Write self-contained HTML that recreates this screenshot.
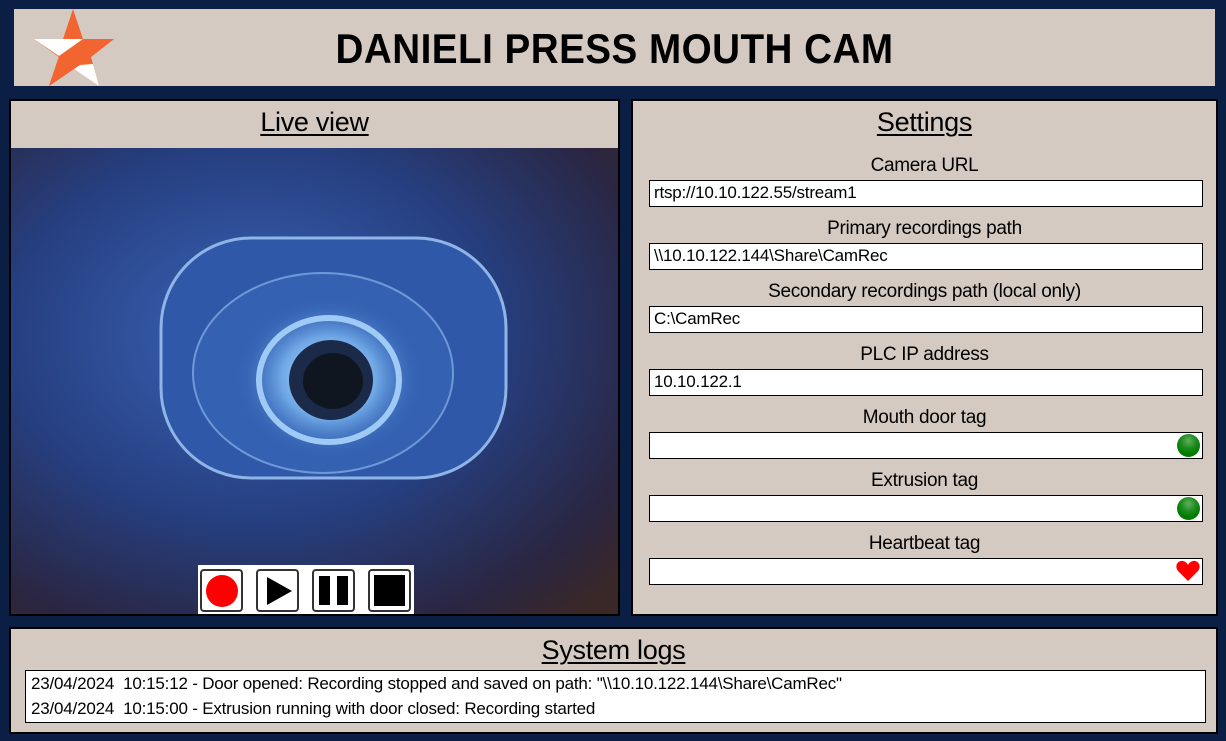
<!DOCTYPE html>
<html><head><meta charset="utf-8"><style>
*{margin:0;padding:0;box-sizing:border-box}
body{width:1226px;height:741px;background:#0b1f45;position:relative;overflow:hidden;font-family:"Liberation Sans",sans-serif;color:#000}
.abs{position:absolute}
.hdr{left:14px;top:9px;width:1201px;height:77px;background:#d4cac1}
.hdr h1{position:absolute;left:0;right:0;top:18px;text-align:center;font-family:"Liberation Sans Narrow","Liberation Sans",sans-serif;font-weight:bold;font-size:42px;letter-spacing:0.5px;line-height:44px;transform:scaleX(0.92)}
.panel{background:#d4cac1;border:2px solid #000}
.ttl{position:absolute;left:0;right:0;text-align:center;font-size:27px;text-decoration:underline;text-decoration-thickness:2px;text-underline-offset:3px;letter-spacing:-0.3px}
.lbl{position:absolute;left:0;right:0;text-align:center;font-size:19px;letter-spacing:-0.3px}
.inp{position:absolute;left:16px;width:554px;height:27px;background:#fff;border:1.5px solid #000;font-size:17px;padding:2px 4px;letter-spacing:-0.2px}
.dot{position:absolute;right:2px;top:1px;width:23px;height:23px;border-radius:50%;background:radial-gradient(circle at 50% 30%,#5fb05f 0,#1b8a1b 40%,#007a00 70%)}
.btn{position:absolute;top:4px;width:43px;height:43px;border:2px solid #333;border-radius:4px;background:#fff}
.log{font-size:17px;line-height:25px;padding-left:5px;letter-spacing:-0.2px}
</style></head><body>
<div class="abs hdr"><h1>DANIELI PRESS MOUTH CAM</h1></div>
<svg class="abs" style="left:33px;top:9px" width="82" height="78" viewBox="0 0 82 78">
<polygon points="40,0 50,30 81,30 58,48 66,77 41,60 16,77 26,48 1,30 30,30" fill="#f26531"/>
<polygon points="1,30 50,30 26,48 27,45 14,37" fill="#fff"/>
<polygon points="1,30 50,30 26,47" fill="#fff"/>
<polygon points="41,60 66,77 60,55 47,56" fill="#fff"/>
<polygon points="26,47 50,30 81,30 58,48 41,60 16,77" fill="#f26531"/>
</svg>

<div class="abs panel" style="left:9px;top:99px;width:611px;height:517px;overflow:hidden">
<div class="ttl" style="top:6px">Live view</div>
<svg class="abs" style="left:0;top:47px" width="607" height="466" viewBox="0 0 607 466">
<defs>
<radialGradient id="bg" cx="0.4" cy="0.4" r="0.8"><stop offset="0" stop-color="#3a64b8"/><stop offset="0.5" stop-color="#263f80"/><stop offset="0.85" stop-color="#2a2540"/><stop offset="1" stop-color="#3a2828"/></radialGradient>
<radialGradient id="glow" cx="0.5" cy="0.5" r="0.5"><stop offset="0" stop-color="#cfe9ff"/><stop offset="0.5" stop-color="#6fa8e6"/><stop offset="1" stop-color="#3060b0" stop-opacity="0"/></radialGradient>
</defs>
<rect width="607" height="466" fill="url(#bg)"/>
<rect x="150" y="90" width="345" height="240" rx="90" fill="#2f58a8" stroke="#8fb4e8" stroke-width="3" transform="rotate(0)"/>
<ellipse cx="312" cy="225" rx="130" ry="100" fill="#3561b3" stroke="#6f98d8" stroke-width="2"/>
<ellipse cx="318" cy="230" rx="95" ry="82" fill="url(#glow)"/>
<ellipse cx="318" cy="232" rx="70" ry="62" fill="none" stroke="#9fcaf5" stroke-width="6"/>
<ellipse cx="320" cy="232" rx="42" ry="40" fill="#1a2a48"/>
<ellipse cx="322" cy="233" rx="30" ry="28" fill="#101620"/>
</svg>
<div class="abs" style="left:187px;top:464px;width:216px;height:50px;background:#fff">
<div class="btn" style="left:2px"><div style="position:absolute;left:4px;top:4px;width:32px;height:32px;border-radius:50%;background:#f00"></div></div>
<div class="btn" style="left:58px"><svg width="39" height="39"><polygon points="9,6 34,20 9,34" fill="#000"/></svg></div>
<div class="btn" style="left:114px"><div style="position:absolute;left:5px;top:5px;width:11px;height:29px;background:#000"></div><div style="position:absolute;left:23px;top:5px;width:11px;height:29px;background:#000"></div></div>
<div class="btn" style="left:170px"><div style="position:absolute;left:4px;top:4px;width:31px;height:31px;background:#000"></div></div>
</div>
</div>

<div class="abs panel" style="left:631px;top:99px;width:587px;height:517px">
<div class="ttl" style="top:6px">Settings</div>
<div class="lbl" style="top:54px">Camera URL</div>
<div class="inp" style="top:79px">rtsp://10.10.122.55/stream1</div>
<div class="lbl" style="top:117px">Primary recordings path</div>
<div class="inp" style="top:142px">\\10.10.122.144\Share\CamRec</div>
<div class="lbl" style="top:180px">Secondary recordings path (local only)</div>
<div class="inp" style="top:205px">C:\CamRec</div>
<div class="lbl" style="top:243px">PLC IP address</div>
<div class="inp" style="top:268px">10.10.122.1</div>
<div class="lbl" style="top:306px">Mouth door tag</div>
<div class="inp" style="top:331px"><div class="dot"></div></div>
<div class="lbl" style="top:369px">Extrusion tag</div>
<div class="inp" style="top:394px"><div class="dot"></div></div>
<div class="lbl" style="top:432px">Heartbeat tag</div>
<div class="inp" style="top:457px"><svg style="position:absolute;right:2px;top:1px" width="24" height="22" viewBox="0 0 24 22"><path d="M12 21 L2 11 C-2 6 2 0 7 1 C9.5 1.5 11 3 12 5 C13 3 14.5 1.5 17 1 C22 0 26 6 22 11 Z" fill="#f00"/></svg></div>
</div>

<div class="abs panel" style="left:9px;top:627px;width:1209px;height:107px">
<div class="ttl" style="top:6px">System logs</div>
<div class="abs" style="left:14px;top:41px;width:1181px;height:53px;background:#fff;border:1.5px solid #000">
<div class="log">23/04/2024&nbsp; 10:15:12 - Door opened: Recording stopped and saved on path: "\\10.10.122.144\Share\CamRec"</div>
<div class="log">23/04/2024&nbsp; 10:15:00 - Extrusion running with door closed: Recording started</div>
</div>
</div>
</body></html>
